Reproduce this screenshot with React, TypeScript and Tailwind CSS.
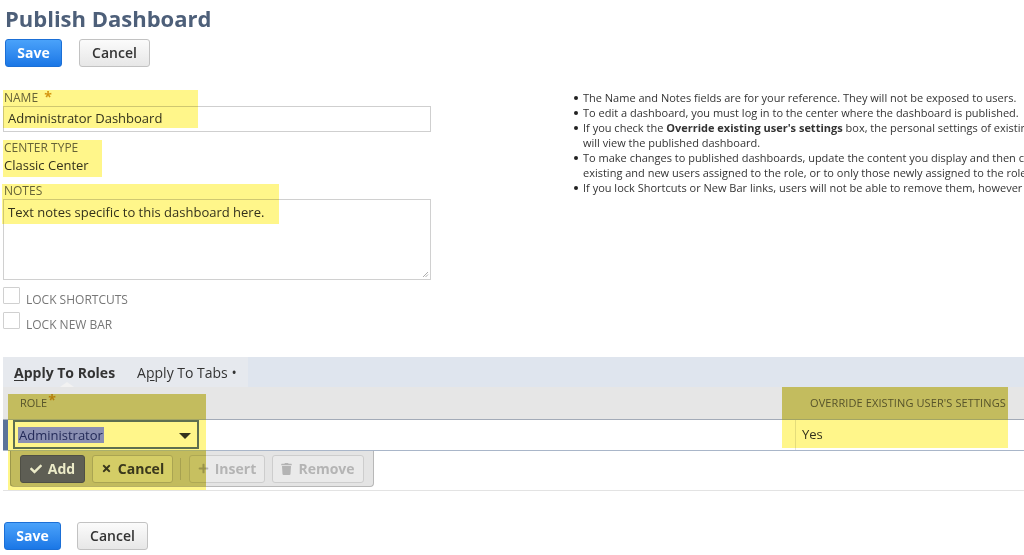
import { FaCheck, FaTimes, FaPlus, FaTrash } from 'react-icons/fa';

const HL_LIGHT = 'absolute bg-[#fff68a] mix-blend-multiply pointer-events-none z-10';
const HL_DARK = 'absolute bg-[#d9d168] mix-blend-multiply pointer-events-none z-10';

function SaveBtn() {
  return (
    <button className="h-[28px] w-[57px] rounded-[3px] border border-[#1b6fd6] bg-linear-to-b from-[#4aa2fa] to-[#1a77e6] text-white text-[14px] font-bold leading-none">
      Save
    </button>
  );
}

function CancelBtn() {
  return (
    <button className="h-[28px] w-[71px] rounded-[3px] border border-[#c2c2c2] bg-linear-to-b from-[#fbfbfb] to-[#e7e7e7] text-[#333] text-[14px] font-semibold leading-none">
      Cancel
    </button>
  );
}

function Check({ label, mt }: { label: string; mt: string }) {
  return (
    <div className={`flex items-end ${mt}`}>
      <div className="w-[17px] h-[17px] border border-[#d0d0d0] bg-white rounded-[1px]" />
      <span className="ml-[6px] text-[12px] leading-[12px] text-[#777] uppercase translate-y-[2px]">{label}</span>
    </div>
  );
}

function Bullet({ children }: { children: React.ReactNode }) {
  return (
    <li className="flex">
      <span className="w-[15px] shrink-0 flex justify-center pt-[6px]">
        <span className="block w-[4px] h-[4px] rounded-full bg-[#222]" />
      </span>
      <span className="whitespace-nowrap">{children}</span>
    </li>
  );
}

export default function App() {
  return (
    <div className="relative w-[1024px] h-[555px] overflow-hidden bg-white font-['Open_Sans',sans-serif] text-[#333]">
      <h1 className="pl-[5px] h-[36px] leading-[36px] text-[22px] font-bold text-[#4d5f79]">Publish Dashboard</h1>
      <div className="flex gap-[17px] pl-[5px] mt-[3px]">
        <SaveBtn />
        <CancelBtn />
      </div>

      <div className="flex mt-[22px]">
        <div className="w-[428px] ml-[3px] shrink-0 flex flex-col">
          <div className="h-[16px] leading-[16px] text-[12px] text-[#666] pl-[1px]">
            NAME <span className="text-[#d49a1c] text-[14px] font-bold ml-[3px]">*</span>
          </div>
          <div className="mt-[1px] h-[26px] border border-[#cfcfcf] flex items-center pl-[4px] text-[13px] text-[#333]">
            Administrator Dashboard
          </div>
          <div className="mt-[8px] h-[16px] leading-[16px] text-[12px] text-[#666] pl-[1px]">CENTER TYPE</div>
          <div className="h-[18px] leading-[18px] text-[13px] text-[#333] pl-[1px]">Classic Center</div>
          <div className="mt-[9px] h-[16px] leading-[16px] text-[12px] text-[#666] pl-[1px]">NOTES</div>
          <div className="relative h-[81px] border border-[#d0d0d0] pl-[4px] pt-[3px] text-[13px] leading-[18px] text-[#333]">
            Text notes specific to this dashboard here.
            <svg className="absolute right-[1px] bottom-[1px]" width="7" height="7" viewBox="0 0 7 7">
              <path d="M6 1 L1 6 M6 3.5 L3.5 6" stroke="#999" strokeWidth="0.8" />
            </svg>
          </div>
          <Check label="Lock Shortcuts" mt="mt-[7px]" />
          <Check label="Lock New Bar" mt="mt-[8px]" />
        </div>

        <ul className="ml-[137px] shrink-0 text-[11px] leading-[15px] text-[#333] pt-[1px]">
          <Bullet>The Name and Notes fields are for your reference. They will not be exposed to users.</Bullet>
          <Bullet>To edit a dashboard, you must log in to the center where the dashboard is published.</Bullet>
          <Bullet>
            If you check the <b>Override existing user's settings</b> box, the personal settings of existing users assigned to the role are replaced, and these users
            <br />
            will view the published dashboard.
          </Bullet>
          <Bullet>
            To make changes to published dashboards, update the content you display and then click Publish Dashboard again. You can apply the changes to
            <br />
            existing and new users assigned to the role, or to only those newly assigned to the role.
          </Bullet>
          <Bullet>If you lock Shortcuts or New Bar links, users will not be able to remove them, however they can still add their own links.</Bullet>
        </ul>
      </div>

      <div className="ml-[3px] mt-[28px] border-b border-[#e3e3e3] pb-[3px]">
        <div className="h-[30px] flex bg-[#dfe5ee]">
          <div className="relative w-[245px] bg-[#e6e9ee] flex items-center">
            <span className="ml-[11px] text-[14px] font-bold text-[#333]">
              <span className="underline underline-offset-2">A</span>pply To Roles
            </span>
            <span className="ml-[22px] text-[14px] text-[#333]">
              A<span className="underline underline-offset-2">p</span>ply To Tabs •
            </span>
            <div className="absolute left-[57px] bottom-0 w-0 h-0 border-x-[7px] border-x-transparent border-b-[5px] border-b-[#f2f2f2]" />
          </div>
        </div>
        <div className="h-[32px] bg-[#e6e6e6] flex items-center text-[11px] text-[#666] uppercase">
          <div className="pl-[17px] w-[792px] shrink-0 flex items-start">
            ROLE<span className="text-[#d49a1c] text-[14px] font-bold leading-[10px] ml-[1px]">*</span>
          </div>
          <div className="pl-[15px] whitespace-nowrap tracking-[0.1px]">OVERRIDE EXISTING USER'S SETTINGS</div>
        </div>
        <div className="h-[32px] flex border-t border-t-[#a3abb8] border-b border-b-[#a9b6c9] bg-white">
          <div className="w-[5px] bg-[#5b7499]" />
          <div className="w-[787px] shrink-0 pl-[5px]">
            <div className="relative w-[186px] h-[29px] border-2 border-[#5e7394] bg-white flex items-center">
              <span className="relative z-20 ml-[3px] bg-[#8a8fb2] text-[#232a58] text-[13px] leading-[16px] px-[1px]">Administrator</span>
              <div className="absolute right-[6px] top-[11px] w-0 h-0 border-x-[6px] border-x-transparent border-t-[6px] border-t-[#333]" />
            </div>
          </div>
          <div className="flex-1 border-l border-[#e4e4e4] pl-[6px] flex items-center text-[13px] text-[#333]">Yes</div>
        </div>
        <div className="pl-[7px]">
          <div className="w-[364px] h-[36px] bg-[#e4e4e4] border border-t-0 border-[#b8b8b8] rounded-b-[4px] flex items-center pl-[9px]">
            <button className="relative z-20 h-[28px] w-[65px] rounded-[3px] bg-[#5e5e54] border border-[#4f4f45] text-[#ecebc8] text-[14px] font-bold flex items-center justify-center gap-[6px]">
              <FaCheck className="w-[12px] h-[12px]" />
              Add
            </button>
            <button className="ml-[7px] h-[28px] w-[81px] rounded-[3px] bg-[#fafafa] border border-[#c8c8c8] text-[#444] text-[14px] font-bold flex items-center justify-center gap-[6px]">
              <FaTimes className="w-[11px] h-[11px]" />
              Cancel
            </button>
            <div className="ml-[7px] w-px h-[22px] bg-[#c4c4c4]" />
            <button className="ml-[8px] h-[28px] w-[76px] rounded-[3px] bg-[#eaeaea] border border-[#cdcdcd] text-[#b4b4b4] text-[14px] font-bold flex items-center justify-center gap-[6px]">
              <FaPlus className="w-[11px] h-[11px]" />
              Insert
            </button>
            <button className="ml-[7px] h-[28px] w-[92px] rounded-[3px] bg-[#eaeaea] border border-[#cdcdcd] text-[#b4b4b4] text-[14px] font-bold flex items-center justify-center gap-[6px]">
              <FaTrash className="w-[11px] h-[12px]" />
              Remove
            </button>
          </div>
        </div>
      </div>

      <div className="flex gap-[16px] pl-[4px] mt-[31px]">
        <SaveBtn />
        <CancelBtn />
      </div>

      {/* highlighter marks */}
      <div className={`${HL_LIGHT} left-[3px] top-[90px] w-[195px] h-[38px]`} />
      <div className={`${HL_LIGHT} left-[3px] top-[140px] w-[99px] h-[37px]`} />
      <div className={`${HL_LIGHT} left-[2px] top-[184px] w-[277px] h-[40px]`} />

      <div className={`${HL_DARK} left-[8px] top-[394px] w-[198px] h-[25px]`} />
      <div className={`${HL_LIGHT} left-[8px] top-[419px] w-[198px] h-[32px]`} />
      <div className={`${HL_LIGHT} left-[8px] top-[451px] w-[2px] h-[39px]`} />
      <div className={`${HL_DARK} left-[10px] top-[451px] w-[196px] h-[35px]`} />
      <div className={`${HL_LIGHT} left-[10px] top-[486px] w-[196px] h-[4px]`} />

      <div className={`${HL_DARK} left-[782px] top-[387px] w-[226px] h-[32px]`} />
      <div className={`${HL_LIGHT} left-[782px] top-[419px] w-[226px] h-[29px]`} />
    </div>
  );
}
